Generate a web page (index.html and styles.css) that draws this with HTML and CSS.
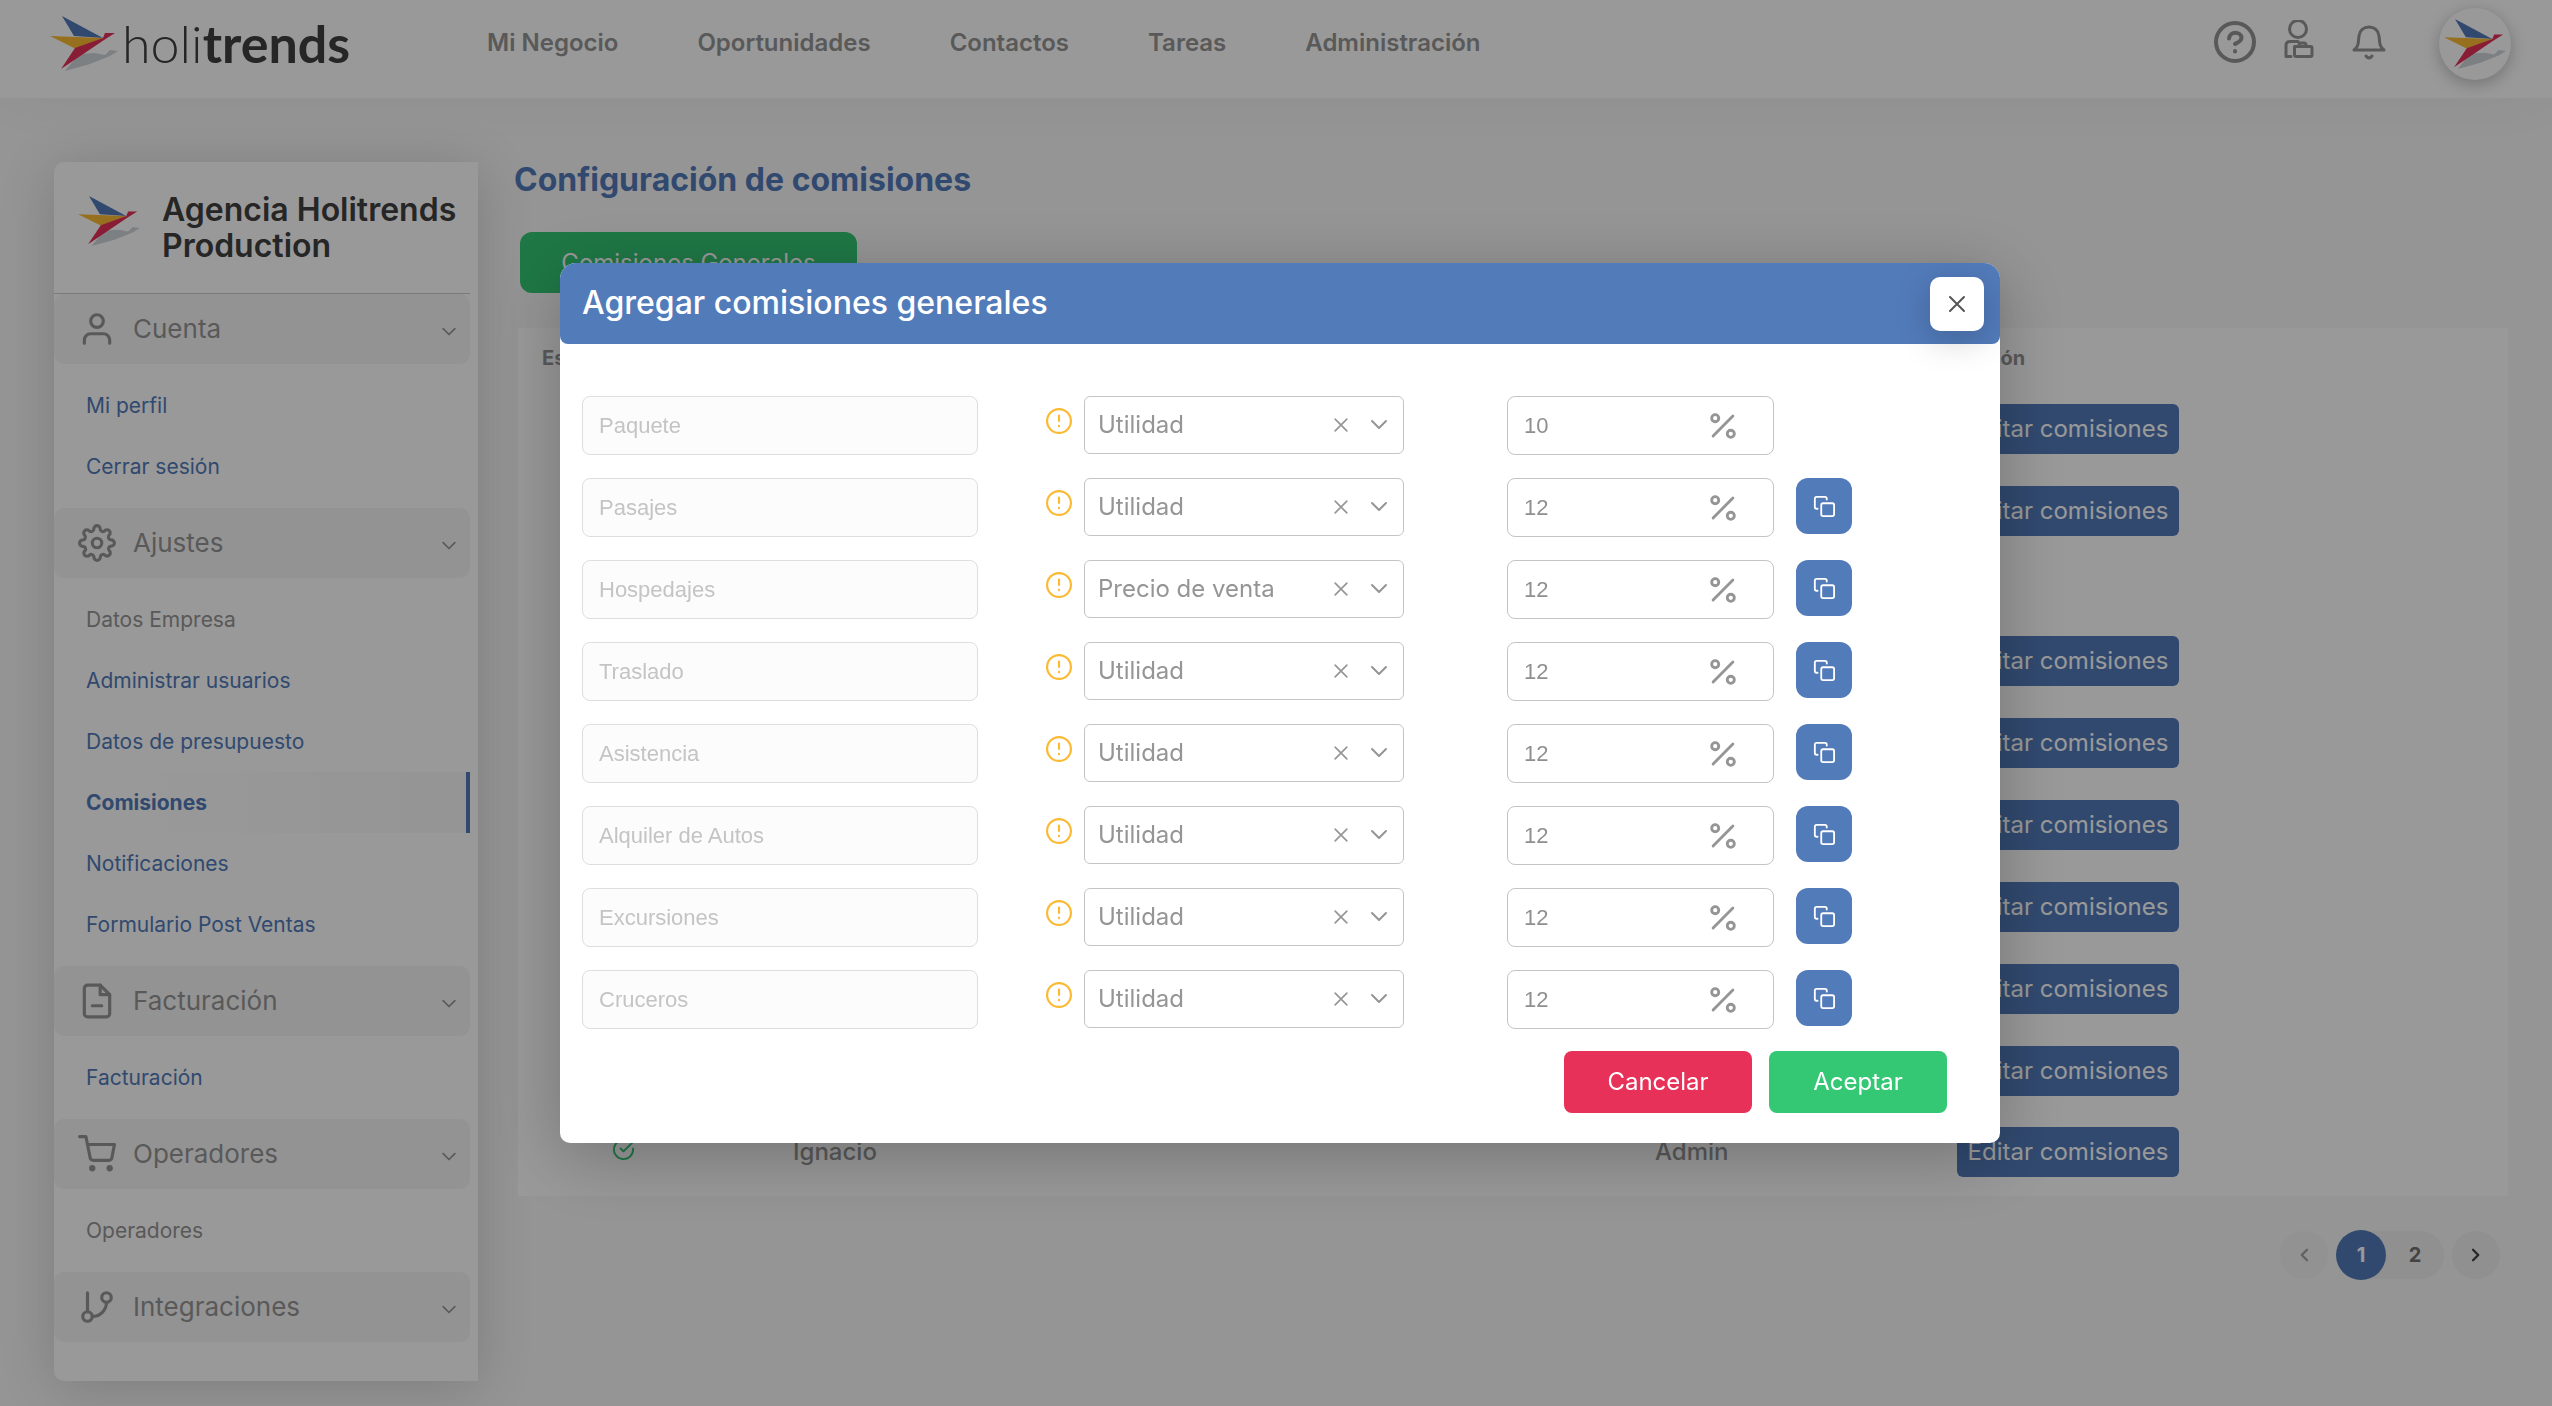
FILE: index.html
```html
<!DOCTYPE html>
<html lang="es">
<head>
<meta charset="utf-8">
<meta name="viewport" content="width=device-width, initial-scale=1">
<title>Holitrends - Configuración de comisiones</title>
<link rel="stylesheet" href="styles.css">
</head>
<body>
<svg class="sprite" aria-hidden="true">
  <symbol id="bird" viewBox="0 0 68 56">
    <path fill="#d0d5d9" d="M15 55 29 38 45 37 55 39 60 34 68 35 60 40 40 48Z"/>
    <path fill="#527bba" d="M12 0 53 22 24 20Z"/>
    <path fill="#fbb934" d="M0 20 53 22 26 33Z"/>
    <path fill="#e7315b" d="M11 53 25 32 53 22 55 17 65 17 54 24Z"/>
  </symbol>
  <symbol id="chevron" viewBox="0 0 24 24"><path d="m5 8 7 7 7-7"/></symbol>
  <symbol id="cross" viewBox="0 0 24 24"><path d="m5 5 14 14M19 5 5 19"/></symbol>
  <symbol id="user" viewBox="0 0 24 24"><path d="M20 21v-2a4 4 0 0 0-4-4H8a4 4 0 0 0-4 4v2"/><circle cx="12" cy="7" r="4"/></symbol>
  <symbol id="cog" viewBox="0 0 24 24"><circle cx="12" cy="12" r="3"/><path d="M19.4 15a1.65 1.65 0 0 0 .33 1.82l.06.06a2 2 0 1 1-2.83 2.83l-.06-.06a1.65 1.65 0 0 0-1.82-.33 1.65 1.65 0 0 0-1 1.51V21a2 2 0 0 1-4 0v-.09A1.65 1.65 0 0 0 9 19.4a1.65 1.65 0 0 0-1.82.33l-.06.06a2 2 0 1 1-2.83-2.83l.06-.06a1.65 1.65 0 0 0 .33-1.82 1.65 1.65 0 0 0-1.51-1H3a2 2 0 0 1 0-4h.09A1.65 1.65 0 0 0 4.6 9a1.65 1.65 0 0 0-.33-1.82l-.06-.06a2 2 0 1 1 2.83-2.83l.06.06a1.65 1.65 0 0 0 1.82.33H9a1.65 1.65 0 0 0 1-1.51V3a2 2 0 0 1 4 0v.09a1.65 1.65 0 0 0 1 1.51 1.65 1.65 0 0 0 1.82-.33l.06-.06a2 2 0 1 1 2.83 2.83l-.06.06a1.65 1.65 0 0 0-.33 1.82V9a1.65 1.65 0 0 0 1.51 1H21a2 2 0 0 1 0 4h-.09a1.65 1.65 0 0 0-1.51 1z"/></symbol>
  <symbol id="file" viewBox="0 0 24 24"><path d="M14 2H6a2 2 0 0 0-2 2v16a2 2 0 0 0 2 2h12a2 2 0 0 0 2-2V8z"/><path d="M14 2v6h6M9 15h6"/></symbol>
  <symbol id="cart" viewBox="0 0 24 24"><circle cx="9" cy="21" r="1"/><circle cx="20" cy="21" r="1"/><path d="M1 1h4l2.68 13.39a2 2 0 0 0 2 1.61h9.72a2 2 0 0 0 2-1.61L23 6H6"/></symbol>
  <symbol id="branch" viewBox="0 0 24 24"><path d="M6 3v12M18 9a9 9 0 0 1-9 9"/><circle cx="18" cy="6" r="3"/><circle cx="6" cy="18" r="3"/></symbol>
  <symbol id="warn" viewBox="0 0 24 24"><circle cx="12" cy="12" r="11"/><path d="M12 7v5M12 16.500v.3"/></symbol>
  <symbol id="percent" viewBox="0 0 24 24"><path d="M19 5 5 19"/><circle cx="6.500" cy="6.500" r="2.500"/><circle cx="17.500" cy="17.500" r="2.500"/></symbol>
  <symbol id="copy" viewBox="0 0 24 24"><rect x="9" y="9" width="14" height="14" rx="2"/><path d="M5 15H4a2 2 0 0 1-2-2V4a2 2 0 0 1 2-2h9a2 2 0 0 1 2 2v1"/></symbol>
</svg>

<header class="topbar">
  <a class="brand" href="#"><svg class="brand-bird"><use href="#bird"/></svg><span class="brand-name">holi<b>trends</b></span></a>
  <nav class="nav" aria-label="Principal">
    <a href="#">Mi Negocio</a>
    <a href="#">Oportunidades</a>
    <a href="#">Contactos</a>
    <a href="#">Tareas</a>
    <a href="#">Administración</a>
  </nav>
  <div class="tools">
    <button class="tool" type="button" aria-label="Ayuda"><svg class="icon" viewBox="0 0 44 44"><circle cx="22" cy="22" r="19"/><path d="M16 18.500c1-8 12-7 12.500-1 0 4-4 5-6.500 6.500M22 31v.4"/></svg></button>
    <button class="tool" type="button" aria-label="Operador"><svg class="icon narrow" viewBox="0 0 44 44"><circle cx="21" cy="9" r="8.500"/><path d="M21 21.500H13q-4 0-4 4v11h5M17.500 26.500h16a1.500 1.500 0 0 1 1.500 1.500v7a1.500 1.500 0 0 1-1.500 1.500h-14a2 2 0 0 1-2-2zM22 26v-1q0-2 2-2h3q2 0 2 2v1"/></svg></button>
    <button class="tool" type="button" aria-label="Notificaciones"><svg class="icon narrow" viewBox="0 0 44 44"><path d="M7 30h30c-5-4-4-7-5-14-.8-6-5-9-10-9s-9.200 3-10 9c-1 7 0 10-5 14zM19 36q3 4 6 0"/></svg></button>
    <button class="avatar" type="button" aria-label="Perfil"><svg class="avatar-bird"><use href="#bird"/></svg></button>
  </div>
</header>

<div class="layout">
  <aside class="sidebar">
    <div class="agency">
      <svg class="agency-bird"><use href="#bird"/></svg>
      <h2>Agencia Holitrends Production</h2>
    </div>
    <nav class="menu" aria-label="Configuración">
      <button class="group" type="button"><svg class="group-icon"><use href="#user"/></svg><span>Cuenta</span><svg class="group-chevron"><use href="#chevron"/></svg></button>
      <ul>
        <li><a href="#">Mi perfil</a></li>
        <li><a href="#">Cerrar sesión</a></li>
      </ul>
      <button class="group" type="button"><svg class="group-icon"><use href="#cog"/></svg><span>Ajustes</span><svg class="group-chevron"><use href="#chevron"/></svg></button>
      <ul>
        <li><a class="muted" href="#">Datos Empresa</a></li>
        <li><a href="#">Administrar usuarios</a></li>
        <li><a href="#">Datos de presupuesto</a></li>
        <li><a class="active" href="#" aria-current="page">Comisiones</a></li>
        <li><a href="#">Notificaciones</a></li>
        <li><a href="#">Formulario Post Ventas</a></li>
      </ul>
      <button class="group" type="button"><svg class="group-icon"><use href="#file"/></svg><span>Facturación</span><svg class="group-chevron"><use href="#chevron"/></svg></button>
      <ul>
        <li><a href="#">Facturación</a></li>
      </ul>
      <button class="group" type="button"><svg class="group-icon"><use href="#cart"/></svg><span>Operadores</span><svg class="group-chevron"><use href="#chevron"/></svg></button>
      <ul>
        <li><a class="muted" href="#">Operadores</a></li>
      </ul>
      <button class="group" type="button"><svg class="group-icon"><use href="#branch"/></svg><span>Integraciones</span><svg class="group-chevron"><use href="#chevron"/></svg></button>
    </nav>
  </aside>

  <main class="content">
    <h1>Configuración de comisiones</h1>
    <button class="general" type="button">Comisiones Generales</button>
    <table class="users">
      <colgroup><col class="c-state"><col class="c-name"><col class="c-role"><col class="c-action"></colgroup>
      <thead><tr><th scope="col">Estado</th><th></th><th></th><th scope="col">Acción</th></tr></thead>
      <tbody>
        <tr><td></td><td></td><td></td><td><button class="edit" type="button">Editar comisiones</button></td></tr>
        <tr><td></td><td></td><td></td><td><button class="edit" type="button">Editar comisiones</button></td></tr>
        <tr class="plain"><td></td><td></td><td></td><td></td></tr>
        <tr><td></td><td></td><td></td><td><button class="edit" type="button">Editar comisiones</button></td></tr>
        <tr><td></td><td></td><td></td><td><button class="edit" type="button">Editar comisiones</button></td></tr>
        <tr><td></td><td></td><td></td><td><button class="edit" type="button">Editar comisiones</button></td></tr>
        <tr><td></td><td></td><td></td><td><button class="edit" type="button">Editar comisiones</button></td></tr>
        <tr><td></td><td></td><td></td><td><button class="edit" type="button">Editar comisiones</button></td></tr>
        <tr><td></td><td></td><td></td><td><button class="edit" type="button">Editar comisiones</button></td></tr>
        <tr><td class="state"><svg class="check" viewBox="0 0 24 24" role="img" aria-label="Activo"><path d="M22 11v1a10 10 0 1 1-6-9.100M22 4 12 14l-3-3"/></svg></td><td>Ignacio</td><td>Admin</td><td><button class="edit" type="button">Editar comisiones</button></td></tr>
      </tbody>
    </table>
    <nav class="pager" aria-label="Paginación">
      <button class="step" type="button" disabled aria-label="Anterior"><svg class="arrow left"><use href="#chevron"/></svg></button>
      <div class="pages"><button class="page current" type="button">1</button><button class="page" type="button">2</button></div>
      <button class="step" type="button" aria-label="Siguiente"><svg class="arrow right"><use href="#chevron"/></svg></button>
    </nav>
  </main>
</div>

<div class="overlay">
  <form class="modal" role="dialog" aria-modal="true" aria-labelledby="modal-title">
    <div class="modal-head">
      <h2 id="modal-title">Agregar comisiones generales</h2>
      <button class="close" type="button" aria-label="Cerrar"><svg class="close-icon"><use href="#cross"/></svg></button>
    </div>
    <div class="rows">
      <div class="row">
        <input class="field" type="text" value="Paquete" aria-label="Servicio" disabled>
        <div class="basis"><svg class="warn"><use href="#warn"/></svg><div class="select"><select aria-label="Base de Paquete"><option>Utilidad</option><option>Precio de venta</option></select><button class="clear" type="button" aria-label="Quitar"><svg class="small-icon"><use href="#cross"/></svg></button><svg class="select-icon"><use href="#chevron"/></svg></div></div>
        <div class="amount"><div class="pct"><input class="field" type="text" value="10" aria-label="Porcentaje de Paquete"><svg class="pct-icon"><use href="#percent"/></svg></div></div>
      </div>
      <div class="row">
        <input class="field" type="text" value="Pasajes" aria-label="Servicio" disabled>
        <div class="basis"><svg class="warn"><use href="#warn"/></svg><div class="select"><select aria-label="Base de Pasajes"><option>Utilidad</option><option>Precio de venta</option></select><button class="clear" type="button" aria-label="Quitar"><svg class="small-icon"><use href="#cross"/></svg></button><svg class="select-icon"><use href="#chevron"/></svg></div></div>
        <div class="amount"><div class="pct"><input class="field" type="text" value="12" aria-label="Porcentaje de Pasajes"><svg class="pct-icon"><use href="#percent"/></svg></div><button class="copy" type="button" aria-label="Copiar"><svg class="copy-icon"><use href="#copy"/></svg></button></div>
      </div>
      <div class="row">
        <input class="field" type="text" value="Hospedajes" aria-label="Servicio" disabled>
        <div class="basis"><svg class="warn"><use href="#warn"/></svg><div class="select"><select aria-label="Base de Hospedajes"><option>Utilidad</option><option selected>Precio de venta</option></select><button class="clear" type="button" aria-label="Quitar"><svg class="small-icon"><use href="#cross"/></svg></button><svg class="select-icon"><use href="#chevron"/></svg></div></div>
        <div class="amount"><div class="pct"><input class="field" type="text" value="12" aria-label="Porcentaje de Hospedajes"><svg class="pct-icon"><use href="#percent"/></svg></div><button class="copy" type="button" aria-label="Copiar"><svg class="copy-icon"><use href="#copy"/></svg></button></div>
      </div>
      <div class="row">
        <input class="field" type="text" value="Traslado" aria-label="Servicio" disabled>
        <div class="basis"><svg class="warn"><use href="#warn"/></svg><div class="select"><select aria-label="Base de Traslado"><option>Utilidad</option><option>Precio de venta</option></select><button class="clear" type="button" aria-label="Quitar"><svg class="small-icon"><use href="#cross"/></svg></button><svg class="select-icon"><use href="#chevron"/></svg></div></div>
        <div class="amount"><div class="pct"><input class="field" type="text" value="12" aria-label="Porcentaje de Traslado"><svg class="pct-icon"><use href="#percent"/></svg></div><button class="copy" type="button" aria-label="Copiar"><svg class="copy-icon"><use href="#copy"/></svg></button></div>
      </div>
      <div class="row">
        <input class="field" type="text" value="Asistencia" aria-label="Servicio" disabled>
        <div class="basis"><svg class="warn"><use href="#warn"/></svg><div class="select"><select aria-label="Base de Asistencia"><option>Utilidad</option><option>Precio de venta</option></select><button class="clear" type="button" aria-label="Quitar"><svg class="small-icon"><use href="#cross"/></svg></button><svg class="select-icon"><use href="#chevron"/></svg></div></div>
        <div class="amount"><div class="pct"><input class="field" type="text" value="12" aria-label="Porcentaje de Asistencia"><svg class="pct-icon"><use href="#percent"/></svg></div><button class="copy" type="button" aria-label="Copiar"><svg class="copy-icon"><use href="#copy"/></svg></button></div>
      </div>
      <div class="row">
        <input class="field" type="text" value="Alquiler de Autos" aria-label="Servicio" disabled>
        <div class="basis"><svg class="warn"><use href="#warn"/></svg><div class="select"><select aria-label="Base de Alquiler de Autos"><option>Utilidad</option><option>Precio de venta</option></select><button class="clear" type="button" aria-label="Quitar"><svg class="small-icon"><use href="#cross"/></svg></button><svg class="select-icon"><use href="#chevron"/></svg></div></div>
        <div class="amount"><div class="pct"><input class="field" type="text" value="12" aria-label="Porcentaje de Alquiler de Autos"><svg class="pct-icon"><use href="#percent"/></svg></div><button class="copy" type="button" aria-label="Copiar"><svg class="copy-icon"><use href="#copy"/></svg></button></div>
      </div>
      <div class="row">
        <input class="field" type="text" value="Excursiones" aria-label="Servicio" disabled>
        <div class="basis"><svg class="warn"><use href="#warn"/></svg><div class="select"><select aria-label="Base de Excursiones"><option>Utilidad</option><option>Precio de venta</option></select><button class="clear" type="button" aria-label="Quitar"><svg class="small-icon"><use href="#cross"/></svg></button><svg class="select-icon"><use href="#chevron"/></svg></div></div>
        <div class="amount"><div class="pct"><input class="field" type="text" value="12" aria-label="Porcentaje de Excursiones"><svg class="pct-icon"><use href="#percent"/></svg></div><button class="copy" type="button" aria-label="Copiar"><svg class="copy-icon"><use href="#copy"/></svg></button></div>
      </div>
      <div class="row">
        <input class="field" type="text" value="Cruceros" aria-label="Servicio" disabled>
        <div class="basis"><svg class="warn"><use href="#warn"/></svg><div class="select"><select aria-label="Base de Cruceros"><option>Utilidad</option><option>Precio de venta</option></select><button class="clear" type="button" aria-label="Quitar"><svg class="small-icon"><use href="#cross"/></svg></button><svg class="select-icon"><use href="#chevron"/></svg></div></div>
        <div class="amount"><div class="pct"><input class="field" type="text" value="12" aria-label="Porcentaje de Cruceros"><svg class="pct-icon"><use href="#percent"/></svg></div><button class="copy" type="button" aria-label="Copiar"><svg class="copy-icon"><use href="#copy"/></svg></button></div>
      </div>
    </div>
    <div class="actions">
      <button class="btn cancel" type="button">Cancelar</button>
      <button class="btn accept" type="submit">Aceptar</button>
    </div>
  </form>
</div>
</body>
</html>
```
FILE: styles.css
```css
:root {
  --blue: #527bba;
  --green: #34c774;
  --red: #e73158;
  --grey: #959595;
  --sans: Inter, "Open Sans", sans-serif;
}

* { box-sizing: border-box; }

body {
  margin: 0;
  min-height: 100vh;
  overflow: hidden;
  background: #f8f8f8;
  color: var(--grey);
  font: 400 24px/32px var(--sans);
}

h1, h2, ul { margin: 0; padding: 0; }
ul { list-style: none; }
a { color: inherit; text-decoration: none; }
button { border: 0; padding: 0; background: none; color: inherit; font: inherit; cursor: pointer; }

svg {
  flex: none;
  fill: none;
  stroke: currentColor;
  stroke-width: 2;
  stroke-linecap: round;
  stroke-linejoin: round;
}
.sprite { display: none; }

/* top bar */
.topbar {
  display: flex;
  align-items: flex-start;
  height: 98px;
  padding: 8px 41px 0 50px;
  background: #fff;
  box-shadow: 0 0 60px rgba(0, 0, 0, .04);
}
.brand { display: flex; width: 437px; align-items: flex-start; gap: 4px; padding-top: 8px; }
.brand-bird { width: 68px; height: 56px; stroke: none; }
.brand-name { font: 300 52px/54px Lato, sans-serif; color: #404040; }
.brand-name b { font-weight: 700; }
.nav { display: flex; flex: 1; gap: 79px; padding-top: 19px; font-weight: 600; }
.tools { display: flex; gap: 20px; }
.tool { display: flex; width: 44px; height: 44px; margin-top: 12px; }
.tool + .tool { margin-right: 6px; }
.icon { width: 44px; height: 44px; stroke-width: 4; }
.icon.narrow { stroke-width: 3; }
.avatar {
  display: grid;
  place-items: center;
  width: 72px;
  height: 72px;
  margin-left: 22px;
  border-radius: 50%;
  background: #fff;
  box-shadow: 0 4px 16px rgba(0, 0, 0, .25);
}
.avatar-bird { width: 62px; height: 51px; stroke: none; }

/* page */
.layout { display: flex; align-items: flex-start; gap: 36px; padding: 64px 44px 26px 54px; }

.sidebar {
  flex: none;
  width: 424px;
  padding: 0 8px 39px 0;
  border-radius: 10px 0 0 10px;
  background: #fff;
  box-shadow: 0 6px 56px rgba(0, 0, 0, .16);
}
.agency {
  display: flex;
  gap: 22px;
  height: 132px;
  padding: 30px 0 0 24px;
  border-bottom: 1px solid #ccc;
}
.agency-bird { width: 62px; height: 51px; margin-top: 4px; stroke: none; }
.agency h2 { font-size: 32px; line-height: 36px; font-weight: 600; color: #404040; }

.group {
  display: flex;
  align-items: center;
  gap: 17px;
  width: 100%;
  height: 70px;
  padding: 0 11px 0 24px;
  border-radius: 10px;
  background: #f5f5f5;
  font-size: 26px;
  text-align: left;
}
.group span { flex: 1; }
.group-icon { width: 38px; height: 38px; }
.group-chevron { width: 20px; height: 20px; margin-top: 6px; }
.menu ul { padding: 11px 0; }
.menu li a {
  display: block;
  height: 61px;
  padding-left: 32px;
  font-size: 21px;
  line-height: 61px;
  color: var(--blue);
}
.menu li .muted { color: var(--grey); }
.menu li .active {
  border-right: 4px solid var(--blue);
  background: linear-gradient(90deg, #fff 20%, #f8f8f8);
  font-weight: 700;
}

.content { flex: 1; min-width: 0; }
.content h1 { font-size: 32px; line-height: 36px; font-weight: 700; color: var(--blue); }
.general {
  display: block;
  min-width: 337px;
  height: 61px;
  margin: 34px 0 35px 6px;
  border-radius: 12px;
  background: var(--green);
  color: #fff;
}
.users {
  width: calc(100% - 4px);
  margin-left: 4px;
  border-collapse: collapse;
  border-bottom: 3px solid #fff;
  background: #fff;
  table-layout: fixed;
}
.c-state { width: 275px; }
.c-name { width: 862px; }
.c-role { width: 302px; }
.users th { height: 60px; padding: 0 0 0 24px; font-size: 20px; text-align: left; }
.users th:last-child { padding: 0; }
.users td { height: 82px; padding: 0; font-weight: 500; }
.users .plain td { height: 68px; }
.users .state { padding-left: 94px; }
.check { display: block; width: 23px; height: 23px; margin-bottom: 6px; color: var(--green); }
.edit {
  display: block;
  width: 222px;
  height: 50px;
  border-radius: 6px;
  background: var(--blue);
  color: #fff;
  font-weight: 400;
}

.pager {
  display: flex;
  align-items: center;
  justify-content: flex-end;
  gap: 8px;
  margin: 35px 8px 0 0;
  font-size: 20px;
  font-weight: 700;
}
.step {
  display: grid;
  place-items: center;
  width: 48px;
  height: 48px;
  border-radius: 50%;
  background: #f0f0f0;
  color: #404040;
}
.step:disabled { background: #f3f3f3; color: #a0a0a0; }
.arrow { width: 18px; height: 18px; stroke-width: 3; }
.left { transform: rotate(90deg); }
.right { transform: rotate(-90deg); }
.pages { display: flex; align-items: center; height: 48px; border-radius: 25px; background: #f0f0f0; color: #707070; }
.page { width: 58px; height: 48px; }
.page.current { width: 50px; height: 50px; border-radius: 50%; background: var(--blue); color: #fff; }

/* modal */
.overlay {
  position: fixed;
  inset: 0;
  display: grid;
  place-items: center;
  padding-left: 8px;
  background: rgba(0, 0, 0, .4);
}
.modal {
  width: 1440px;
  max-width: 100%;
  border-radius: 16px 16px 10px 10px;
  background: #fff;
  box-shadow: 0 14px 70px rgba(0, 0, 0, .25);
}
.modal-head {
  display: flex;
  align-items: center;
  justify-content: space-between;
  height: 81px;
  padding: 0 16px 0 22px;
  border-radius: 16px 16px 8px 8px;
  background: var(--blue);
  color: #fff;
}
.modal-head h2 { padding-bottom: 2px; font-size: 32px; font-weight: 500; line-height: 40px; }
.close {
  display: grid;
  place-items: center;
  width: 54px;
  height: 54px;
  border-radius: 10px;
  background: #fff;
  color: #555;
  box-shadow: 0 8px 36px rgba(0, 0, 0, .2);
}
.close-icon { width: 24px; height: 24px; }

.rows { display: grid; gap: 23px; padding: 52px 148px 0 22px; }
.row { display: grid; grid-template-columns: 396fr 426fr 448fr; height: 59px; }
.field {
  width: 100%;
  height: 59px;
  padding: 0 16px;
  border: 1px solid #c4c4c4;
  border-radius: 8px;
  background: #fff;
  color: #8f8f8f;
  font: 22px/32px "Liberation Sans", Arial, sans-serif;
}
.field:disabled { border-color: #dedede; background: #fcfcfc; color: #c4c4c4; }
.basis { display: flex; gap: 12px; padding-left: 68px; }
.warn { width: 26px; height: 26px; margin-top: 12px; color: #fcb932; }
.select {
  display: flex;
  flex: 1;
  align-items: center;
  gap: 16px;
  height: 58px;
  padding-right: 12px;
  border: 1px solid #c4c4c4;
  border-radius: 6px;
}
.select select {
  appearance: none;
  flex: 1;
  min-width: 0;
  height: 100%;
  padding: 0 0 0 13px;
  border: 0;
  background: none;
  color: var(--grey);
  font: 400 24px/32px var(--sans);
}
.clear { display: flex; }
.small-icon { width: 20px; height: 20px; }
.select-icon { width: 24px; height: 24px; }
.amount { display: flex; gap: 22px; padding-left: 103px; }
.pct { display: grid; flex: 0 0 267px; align-items: center; }
.pct > * { grid-area: 1 / 1; }
.pct-icon { width: 34px; height: 34px; margin-right: 34px; justify-self: end; }
.copy {
  display: grid;
  place-items: center;
  width: 56px;
  height: 56px;
  border-radius: 12px;
  background: var(--blue);
  color: #fff;
}
.copy-icon { width: 22px; height: 22px; }

.actions { display: flex; justify-content: flex-end; gap: 17px; padding: 22px 53px 30px; }
.btn { height: 62px; padding: 0 40px; border-radius: 8px; color: #fff; }
.cancel { min-width: 188px; background: var(--red); }
.accept { min-width: 178px; background: var(--green); }
```
